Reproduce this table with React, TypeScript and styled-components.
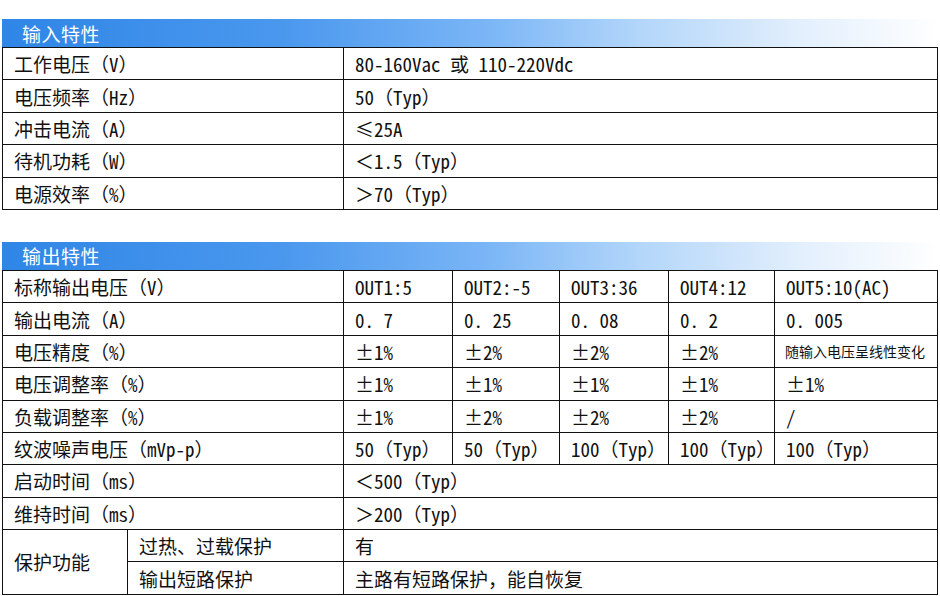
import React from "react";
import styled, { createGlobalStyle } from "styled-components";

const GlobalStyle = createGlobalStyle`
  html, body {
    margin: 0;
    padding: 0;
    background: #ffffff;
  }
  body {
    font-family: "Noto Sans Mono CJK SC", "Noto Sans CJK SC", "DejaVu Sans Mono", monospace;
    color: #111;
  }
`;

const Page = styled.div`
  width: 940px;
  padding: 19px 0 0 2px;
  box-sizing: border-box;
  display: flex;
  flex-direction: column;
  gap: 32px;
`;

const Section = styled.section`
  display: flex;
  flex-direction: column;
`;

const SectionTitle = styled.div`
  height: 28px;
  width: 938px;
  padding-left: 20px;
  box-sizing: border-box;
  display: flex;
  align-items: center;
  color: #ffffff;
  font-size: 19px;
  letter-spacing: 0.5px;
  background: linear-gradient(
    to right,
    #2f86e6 0%,
    #4a98ee 30%,
    #7bb6f6 52%,
    #b3d6fa 68%,
    #e2effd 85%,
    #ffffff 100%
  );
`;

const SpecTable = styled.table`
  border-collapse: collapse;
  table-layout: fixed;
  width: 935px;
`;

const Row = styled.tr`
  height: 32.4px;
`;

const Cell = styled.td<{ $small?: boolean }>`
  border: 1.5px solid #111;
  padding: 0 0 0 ${({ $small }) => ($small ? "10px" : "11px")};
  box-sizing: border-box;
  font-size: ${({ $small }) => ($small ? "14px" : "19px")};
  line-height: 1;
  white-space: nowrap;
  overflow: hidden;
  vertical-align: middle;
`;

const widths = [125, 216, 109, 107, 109, 106, 163];

const Cols = () => (
  <colgroup>
    {widths.map((w, i) => (
      <col key={i} style={{ width: w }} />
    ))}
  </colgroup>
);

const inputRows: [string, string][] = [
  ["工作电压（V）", "80-160Vac 或 110-220Vdc"],
  ["电压频率（Hz）", "50（Typ）"],
  ["冲击电流（A）", "≤25A"],
  ["待机功耗（W）", "＜1.5（Typ）"],
  ["电源效率（%）", "＞70（Typ）"],
];

type OutRow = { label: string; values: string[]; small?: number };

const outputRows: OutRow[] = [
  { label: "标称输出电压（V）", values: ["OUT1:5", "OUT2:-5", "OUT3:36", "OUT4:12", "OUT5:10(AC)"] },
  { label: "输出电流（A）", values: ["0. 7", "0. 25", "0. 08", "0. 2", "0. 005"] },
  { label: "电压精度（%）", values: ["±1%", "±2%", "±2%", "±2%", "随输入电压呈线性变化"], small: 4 },
  { label: "电压调整率（%）", values: ["±1%", "±1%", "±1%", "±1%", "±1%"] },
  { label: "负载调整率（%）", values: ["±1%", "±2%", "±2%", "±2%", "/"] },
  { label: "纹波噪声电压（mVp-p）", values: ["50（Typ）", "50（Typ）", "100（Typ）", "100（Typ）", "100（Typ）"] },
  { label: "启动时间（ms）", values: ["＜500（Typ）"] },
  { label: "维持时间（ms）", values: ["＞200（Typ）"] },
];

export default function App() {
  return (
    <>
      <GlobalStyle />
      <Page>
        <Section>
          <SectionTitle>输入特性</SectionTitle>
          <SpecTable>
            <Cols />
            <tbody>
              {inputRows.map(([label, value]) => (
                <Row key={label}>
                  <Cell colSpan={2}>{label}</Cell>
                  <Cell colSpan={5}>{value}</Cell>
                </Row>
              ))}
            </tbody>
          </SpecTable>
        </Section>

        <Section>
          <SectionTitle>输出特性</SectionTitle>
          <SpecTable>
            <Cols />
            <tbody>
              {outputRows.map((row) => (
                <Row key={row.label}>
                  <Cell colSpan={2}>{row.label}</Cell>
                  {row.values.length === 1 ? (
                    <Cell colSpan={5}>{row.values[0]}</Cell>
                  ) : (
                    row.values.map((v, i) => (
                      <Cell key={i} $small={row.small === i}>
                        {v}
                      </Cell>
                    ))
                  )}
                </Row>
              ))}
              <Row>
                <Cell rowSpan={2}>保护功能</Cell>
                <Cell>过热、过载保护</Cell>
                <Cell colSpan={5}>有</Cell>
              </Row>
              <Row>
                <Cell>输出短路保护</Cell>
                <Cell colSpan={5}>主路有短路保护，能自恢复</Cell>
              </Row>
            </tbody>
          </SpecTable>
        </Section>
      </Page>
    </>
  );
}
